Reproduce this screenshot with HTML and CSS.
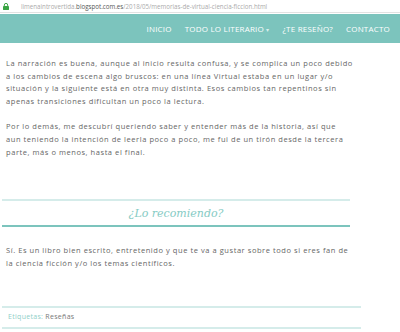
FILE: index.html
```html
<!DOCTYPE html>
<html lang="es">
<head>
<meta charset="utf-8">
<link rel="stylesheet" href="styles.css">
</head>
<body>
<div class="urlbar">
  <svg class="lock" width="6" height="7" viewBox="0 0 6 7"><path d="M1.3 3.2V2.1a1.7 1.7 0 0 1 3.4 0V3.2" fill="none" stroke="#3aa544" stroke-width="1"/><rect x="0" y="3" width="6" height="4" rx="0.4" fill="#3aa544"/></svg>
  <span class="url">limenaintrovertida.<b>blogspot.com.es</b>/2018/05/memorias-de-virtual-ciencia-ficcion.html</span>
</div>
<nav class="nav">
  <a>INICIO</a>
  <a>TODO LO LITERARIO <span class="caret">▾</span></a>
  <a>¿TE RESEÑO?</a>
  <a>CONTACTO</a>
</nav>
<main class="post">
  <p>La narración es buena, aunque al inicio resulta confusa, y se complica un poco debido a los cambios de escena algo bruscos: en una línea Virtual estaba en un lugar y/o situación y la siguiente está en otra muy distinta. Esos cambios tan repentinos sin apenas transiciones dificultan un poco la lectura.</p>
  <p>Por lo demás, me descubrí queriendo saber y entender más de la historia, así que<br>aun teniendo la intención de leerla poco a poco, me fui de un tirón desde la tercera parte, más o menos, hasta el final.</p>
  <h2 class="rec">¿Lo recomiendo?</h2>
  <p>Sí. Es un libro bien escrito, entretenido y que te va a gustar sobre todo si eres fan de la ciencia ficción y/o los temas científicos.</p>
  <div class="labels"><span class="lab">Etiquetas:</span> Reseñas</div>
</main>
</body>
</html>
```
FILE: styles.css
```css
body {
  margin: 0;
  background: #fff;
  font-family: "Open Sans", sans-serif;
  color: #666;
}
.urlbar {
  height: 13px;
  border-bottom: 1px solid #e2e2e2;
  display: flex;
  align-items: center;
  padding-left: 3px;
  box-sizing: border-box;
}
.lock { margin-right: 12px; }
.url {
  font-size: 6.2px;
  color: #aaa;
  white-space: nowrap;
}
.url b { font-weight: normal; color: #555; }
.nav {
  margin-top: 1px;
  height: 29px;
  background: #7cc4bd;
  display: flex;
  justify-content: flex-end;
  align-items: center;
  gap: 13px;
  padding-right: 10px;
}
.nav a {
  color: #fff;
  font-size: 8px;
  letter-spacing: 0.2px;
}
.caret { font-size: 6px; color: #d8eeeb; }
.post {
  padding: 14px 0 0 2px;
}
.post p {
  margin: 0 0 12.5px;
  padding-left: 4px;
  width: 348px;
  font-size: 7.5px;
  letter-spacing: 0.56px;
  line-height: 12.7px;
}
.rec {
  margin: 41px 0 17px;
  width: 348px;
  border-top: 2px solid #d5ecea;
  border-bottom: 2px solid #7cc4bd;
  font-family: "DejaVu Serif", serif;
  font-style: italic;
  font-weight: normal;
  color: #86cbc4;
  font-size: 11px;
  text-align: center;
  height: 24px;
  line-height: 26px;
}
.labels {
  margin-top: 36px;
  width: 359px;
  border-top: 2px solid #d5ecea;
  border-bottom: 2px solid #d5ecea;
  font-size: 7px;
  letter-spacing: 0.3px;
  color: #777;
  padding: 4px 6px;
  box-sizing: border-box;
  height: 23px;
}
.lab { color: #8fcfc8; }
```
